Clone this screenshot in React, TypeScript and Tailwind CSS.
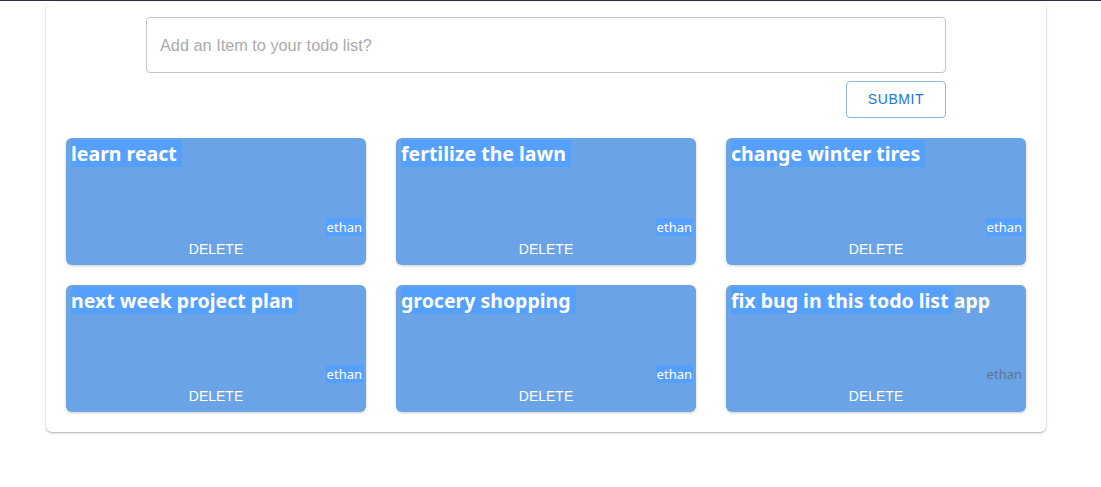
import React, { useState } from 'react';

type Todo = {
  id: number;
  title: string;
  rest?: string;
  author: string;
  faded?: boolean;
};

const initialTodos: Todo[] = [
  { id: 1, title: 'learn react ', author: 'ethan' },
  { id: 2, title: 'fertilize the lawn ', author: 'ethan' },
  { id: 3, title: 'change winter tires ', author: 'ethan' },
  { id: 4, title: 'next week project plan ', author: 'ethan' },
  { id: 5, title: 'grocery shopping ', author: 'ethan' },
  { id: 6, title: 'fix bug in this todo list ', rest: 'app', author: 'ethan', faded: true },
];

const TodoCard: React.FC<{ todo: Todo; onDelete: (id: number) => void }> = ({ todo, onDelete }) => {
  return (
    <div className="h-[127px] rounded-[6px] bg-[#6aa3e6] shadow-[0_1px_3px_rgba(0,0,0,0.2)] flex flex-col px-[5px] pt-[2px] pb-[6px] text-white">
      <h2 className="text-[19.5px] font-bold leading-[26px] whitespace-pre pt-[1px]">
        <span className="bg-[#55a0fd]">{todo.title}</span>
        {todo.rest}
      </h2>
      <div className="flex-1" />
      <div className="flex justify-end -mr-[2px]">
        {todo.faded ? (
          <span className="text-[13px] leading-[18px] text-[#5f7590] px-[1px]">{todo.author}</span>
        ) : (
          <span className="text-[13px] leading-[18px] bg-[#55a0fd] px-[1px]">{todo.author}</span>
        )}
      </div>
      <button
        onClick={() => onDelete(todo.id)}
        className="mt-[3px] text-[14px] leading-[20px] uppercase text-white font-['Liberation_Sans',Arial,sans-serif]"
      >
        Delete
      </button>
    </div>
  );
};

export default function App() {
  const [todos, setTodos] = useState<Todo[]>(initialTodos);
  const [text, setText] = useState('');

  const handleDelete = (id: number) => setTodos(prev => prev.filter(t => t.id !== id));

  const handleSubmit = () => {
    if (!text.trim()) return;
    setTodos(prev => [...prev, { id: Date.now(), title: text + ' ', author: 'ethan' }]);
    setText('');
  };

  return (
    <div className="min-h-[487px] bg-white font-['Noto_Sans',sans-serif] border-t border-[#2b2f3b]">
      <div className="mx-[46px] mt-[1px] w-[1000px] rounded-[6px] bg-white shadow-[0_1px_3px_rgba(0,0,0,0.22),0_1px_1px_rgba(0,0,0,0.12)] px-[20px] pt-[15px] pb-[20px]">
        <div className="w-[800px] mx-auto flex flex-col">
          <input
            value={text}
            onChange={e => setText(e.target.value)}
            placeholder="Add an Item to your todo list?"
            className="h-[56px] w-full rounded-[4px] border border-[#c4c4c4] px-[13px] text-[16.3px] text-[#333] placeholder:text-[#ababab] outline-none font-['Liberation_Sans',Arial,sans-serif]"
          />
          <div className="flex justify-end mt-[8px]">
            <button
              onClick={handleSubmit}
              className="w-[100px] h-[37px] rounded-[4px] border border-[#8ab7e6] text-[#1976d2] text-[14px] tracking-[0.6px] font-['Liberation_Sans',Arial,sans-serif]"
            >
              SUBMIT
            </button>
          </div>
        </div>
        <div className="mt-[20px] grid grid-cols-3 gap-x-[30px] gap-y-[20px]">
          {todos.map(t => (
            <TodoCard key={t.id} todo={t} onDelete={handleDelete} />
          ))}
        </div>
      </div>
    </div>
  );
}
